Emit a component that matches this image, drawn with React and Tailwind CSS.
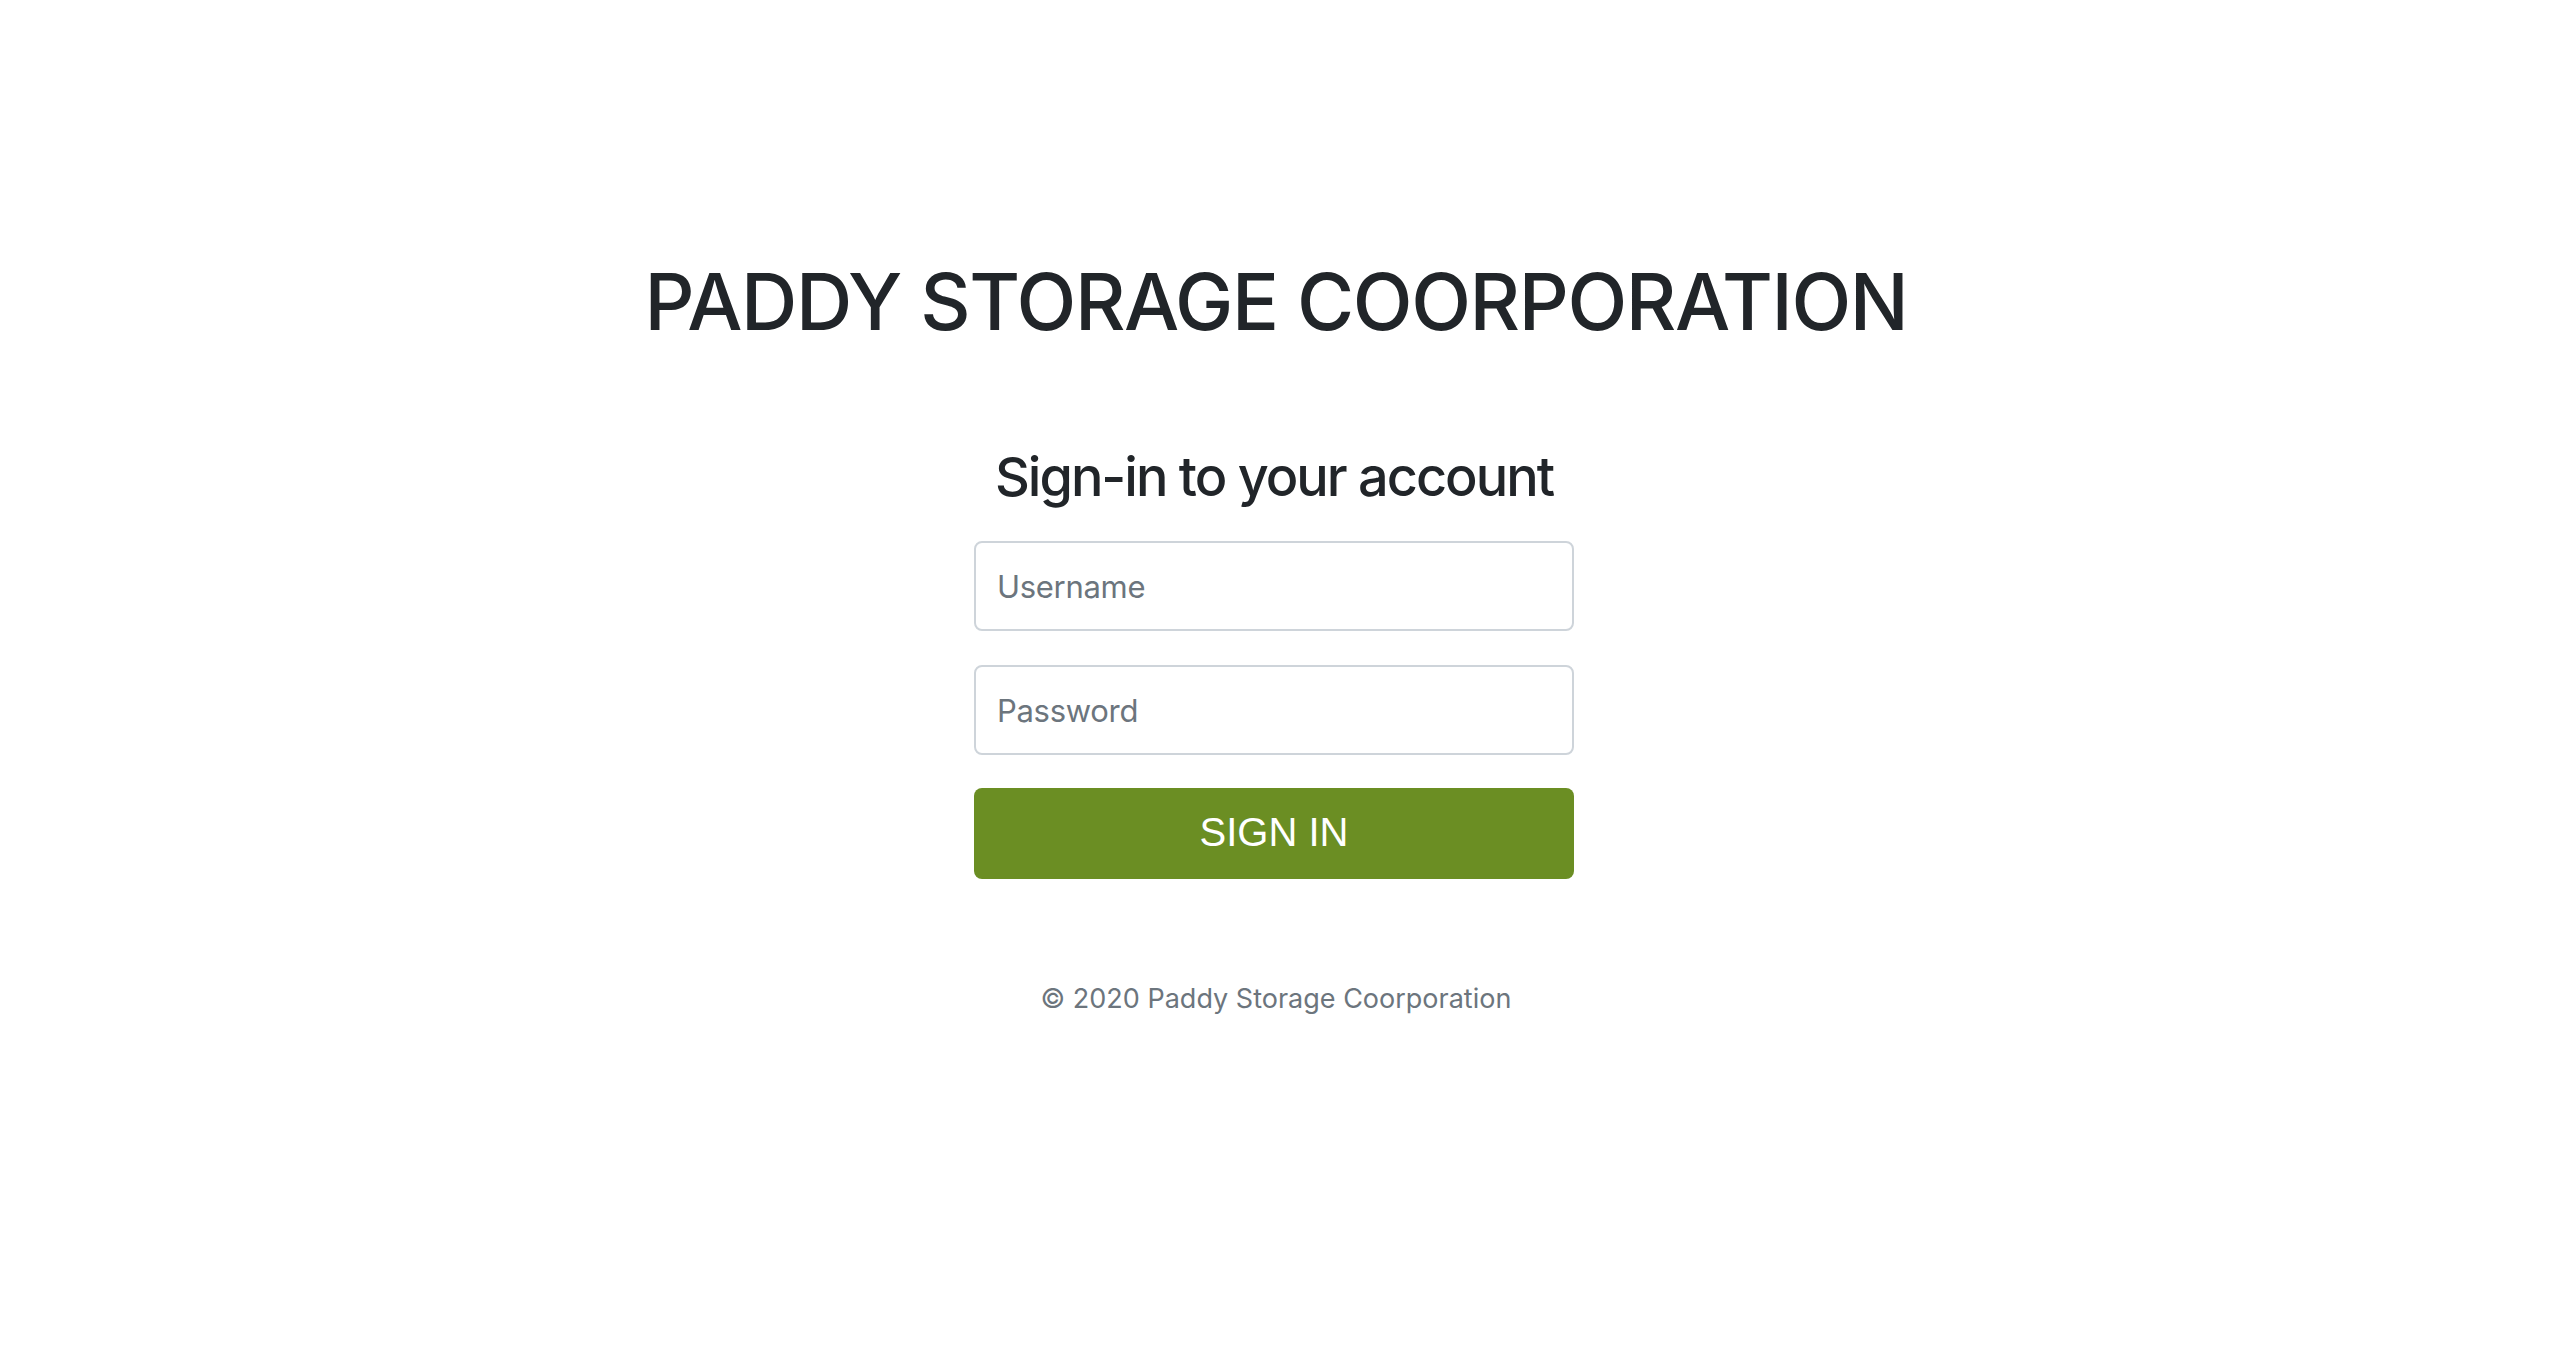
import React from 'react';

export default function App() {
  return (
    <div className="min-h-screen bg-white flex flex-col items-center text-[#212529] font-['Inter',sans-serif]">
      <h1 className="pt-[255px] text-[78px] leading-[94px] font-medium tracking-[-1.4px]">
        PADDY STORAGE COORPORATION
      </h1>

      <form className="mt-[96px] w-[600px] -translate-x-[2px] flex flex-col items-stretch" onSubmit={e => e.preventDefault()}>
        <h2 className="text-center text-[54px] leading-[64px] font-medium tracking-[-2px]">Sign-in to your account</h2>

        <input
          type="text"
          placeholder="Username"
          className="mt-[32px] h-[90px] w-full rounded-[8px] border-2 border-[#ced4da] bg-white px-[21px] text-[31px] tracking-[-0.3px] text-[#495057] placeholder:text-[#6c757d] outline-none"
        />
        <input
          type="password"
          placeholder="Password"
          className="mt-[34px] h-[90px] w-full rounded-[8px] border-2 border-[#ced4da] bg-white px-[21px] text-[31px] tracking-[-0.3px] text-[#495057] placeholder:text-[#6c757d] outline-none"
        />

        <button
          type="submit"
          className="mt-[33px] h-[91px] w-full rounded-[8px] bg-[#6b8e23] text-white text-[40px] leading-[84px] pb-[4px] font-['Liberation_Sans',Arial,sans-serif]"
        >
          SIGN IN
        </button>
      </form>

      <p className="mt-[100px] text-[27px] leading-[40px] text-[#6c757d]">© 2020 Paddy Storage Coorporation</p>
    </div>
  );
}
